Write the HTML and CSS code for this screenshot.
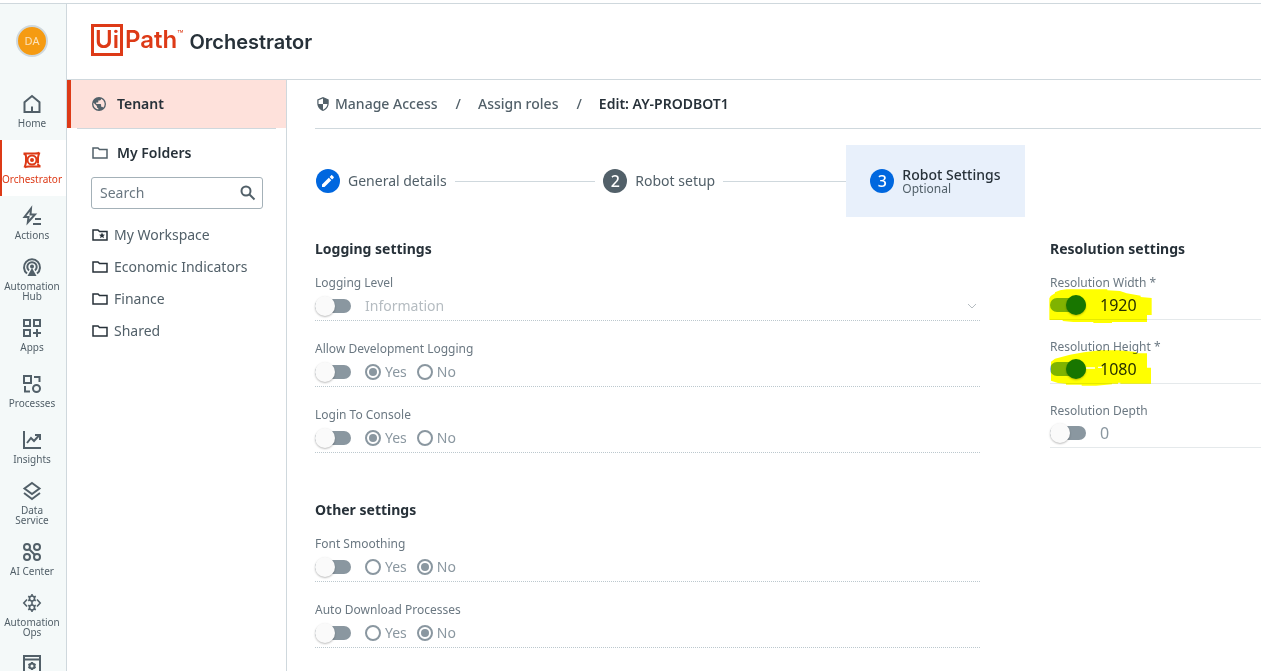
FILE: index.html
```html
<!DOCTYPE html>
<html lang="en">
<head>
<meta charset="utf-8">
<meta name="viewport" content="width=device-width, initial-scale=1">
<title>UiPath Orchestrator</title>
<link rel="stylesheet" href="styles.css">
</head>
<body>
<div class="app">
  <nav class="rail" aria-label="Services">
    <button class="avatar" type="button">DA</button>
    <a class="rail-item" href="#"><svg class="rail-icon" viewBox="0 0 18 18"><path d="M1.500 17V7.200L9 1l7.500 6.200V17zM9 17v-5.500"/></svg><span>Home</span></a>
    <a class="rail-item rail-item-active" href="#"><svg class="rail-icon" viewBox="0 0 18 18"><path d="M.5 2.500H12M16.500 1.500C15.500 4 15 5.500 15 7v5M17.500 15.500H6M1.500 16.500C2.500 14 3 12.500 3 11V5M3 5.500C3 4 2.500 3 .5 2.500M15 12.500c0 1.500.5 2.500 2.500 3M12 2.500c2 0 3.500-.3 4.500-1M6 15.500c-2 0-3.500.3-4.500 1"/><circle cx="9" cy="9" r="4.500"/><circle cx="9" cy="9" r="1"/></svg><span>Orchestrator</span></a>
    <a class="rail-item" href="#"><svg class="rail-icon" viewBox="0 0 18 18"><path d="M8 1.500L1.500 10h4L4.800 15.500 12 7.500H7.500zM12 12h6M10 17h8"/></svg><span>Actions</span></a>
    <a class="rail-item" href="#"><svg class="rail-icon" viewBox="0 0 18 18"><path d="M4 15.500a8 8 0 1 1 10 0M6 12.500a4.700 4.700 0 1 1 6 0"/><path class="solid" d="M9 10l4.500 8h-9z"/><circle cx="9" cy="8.500" r="1"/></svg><span>Automation<br>Hub</span></a>
    <a class="rail-item" href="#"><svg class="rail-icon" viewBox="0 0 18 18"><path d="M1 1h6v6H1zM11 1h6v6h-6zM1 11h6v6H1zM14 10v8M10 14h8"/></svg><span>Apps</span></a>
    <a class="rail-item" href="#"><svg class="rail-icon" viewBox="0 0 18 18"><path d="M1 1h7v7H1zM11 2h5.500v5M2 11v5.500h5"/><circle cx="13.500" cy="13.500" r="3.500"/></svg><span>Processes</span></a>
    <a class="rail-item" href="#"><svg class="rail-icon" viewBox="0 0 18 18"><path d="M1 0v17h17M4 12l4-5 3 3 5-5.500M12 4h5v5"/></svg><span>Insights</span></a>
    <a class="rail-item" href="#"><svg class="rail-icon" viewBox="0 0 18 18"><path d="M9 1l7.500 5.500L9 12 1.500 6.500zM1 11l8 6 8-6"/></svg><span>Data<br>Service</span></a>
    <a class="rail-item" href="#"><svg class="rail-icon" viewBox="0 0 18 18"><circle cx="4" cy="4" r="3"/><circle cx="14" cy="4" r="3"/><circle cx="4" cy="14" r="3"/><circle cx="14" cy="14" r="3"/><path d="M6 6l6 6"/></svg><span>AI Center</span></a>
    <a class="rail-item" href="#"><svg class="rail-icon rail-icon-fine" viewBox="0 0 18 18"><circle cx="9" cy="4.500" r="2.500"/><circle cx="9" cy="13.500" r="2.500"/><path d="M9 0v2M5.200 2.300l1.600 1M12.800 2.300l-1.600 1M5.200 6.700l1.600-1M12.800 6.700l-1.600-1M9 7v4M5.200 11.300l1.600 1M12.800 11.300l-1.600 1M5.200 15.700l1.600-1M12.800 15.700l-1.600-1M9 16v2M4 5.500L.8 9 4 12.500M14 5.500L17.200 9 14 12.500"/></svg><span>Automation<br>Ops</span></a>
    <a class="rail-item rail-item-last" href="#"><svg class="rail-icon" viewBox="0 0 18 18"><path d="M1 1h16v16H1zM1 4.500h16M9 7v2M9 13v2M5.500 9L7 10M12.500 9L11 10M5.500 13L7 12M12.500 13L11 12"/><circle cx="9" cy="11" r="2.500"/></svg></a>
  </nav>
  <div class="workspace">
    <header class="topbar">
      <a class="brand" href="#"><span class="brand-box">Ui</span><span class="brand-path">Path</span><span class="brand-tm">™</span><span class="brand-product">Orchestrator</span></a>
    </header>
    <div class="columns">
      <aside class="sidebar">
        <a class="tenant" href="#"><svg class="glyph" viewBox="2 2 20 20"><path d="M12 2a10 10 0 1 0 0 20 10 10 0 0 0 0-20zm-1 17.930A7.990 7.990 0 0 1 4.210 10.210L9 15v1a2 2 0 0 0 2 2zm6.900-2.540A2 2 0 0 0 16 16h-1v-3a1 1 0 0 0-1-1H8v-2h2a1 1 0 0 0 1-1V7h2a2 2 0 0 0 2-2v-.41a7.990 7.990 0 0 1 2.900 12.800z"/></svg><span>Tenant</span></a>
        <div class="folders">
          <div class="folders-title"><svg class="folder" viewBox="0 0 16 12"><path d="M1 1h5l1.500 1.500H15V11H1z"/></svg><span>My Folders</span></div>
          <div class="search"><input type="search" aria-label="Search" placeholder="Search"><svg viewBox="0 0 16 16"><circle cx="6" cy="6" r="4.500"/><path d="M9.500 9.500l5 5"/></svg></div>
          <a class="folder-row" href="#"><svg class="folder" viewBox="0 0 16 12"><path d="M1 1h5l1.500 1.500H15V11H1z"/><path class="star" d="M10 3.500l.9 2 2.100.2-1.600 1.400.5 2.200-1.900-1.200-1.900 1.200.5-2.200L7 5.700l2.100-.2z"/></svg><span>My Workspace</span></a>
          <a class="folder-row" href="#"><svg class="folder" viewBox="0 0 16 12"><path d="M1 1h5l1.500 1.500H15V11H1z"/></svg><span>Economic Indicators</span></a>
          <a class="folder-row" href="#"><svg class="folder" viewBox="0 0 16 12"><path d="M1 1h5l1.500 1.500H15V11H1z"/></svg><span>Finance</span></a>
          <a class="folder-row" href="#"><svg class="folder" viewBox="0 0 16 12"><path d="M1 1h5l1.500 1.500H15V11H1z"/></svg><span>Shared</span></a>
        </div>
      </aside>
      <main class="content">
        <nav class="crumbs" aria-label="Breadcrumb">
          <a href="#"><svg class="shield" viewBox="3 1 18 22"><path d="M12 1L3 5v6c0 5.500 3.800 10.700 9 12 5.200-1.300 9-6.500 9-12V5zm0 11h7c-.5 4.100-3.300 7.800-7 8.900V12H5V6.300l7-3.100z"/></svg>Manage Access</a>
          <span class="slash">/</span>
          <a href="#">Assign roles</a>
          <span class="slash">/</span>
          <span class="current">Edit: AY-PRODBOT1</span>
        </nav>
        <div class="stepper">
          <button class="step" type="button"><span class="badge badge-blue"><svg viewBox="0 0 14 14"><path d="M1 10.500V13h2.500l6.800-6.800-2.500-2.500zM8.600 2.900l2.500 2.500 1.500-1.500c.4-.4.4-.9 0-1.200L11.300 1.400c-.4-.4-.9-.4-1.200 0z"/></svg></span>General details</button>
          <span class="track track-first"></span>
          <button class="step" type="button"><span class="badge">2</span>Robot setup</button>
          <span class="track track-last"></span>
          <button class="step step-active" type="button" aria-current="step"><span class="badge badge-blue">3</span><span class="step-text"><span class="step-title">Robot Settings</span><small>Optional</small></span></button>
        </div>
        <form class="settings">
          <div>
            <section class="group">
              <h2>Logging settings</h2>
              <div class="field">
                <label class="caption" for="level">Logging Level</label>
                <div class="control"><input class="switch" type="checkbox" aria-label="Override logging level"><select id="level" disabled><option>Information</option></select><svg class="chevron" viewBox="0 0 10 6"><path d="M1 1l4 4 4-4"/></svg></div>
              </div>
              <div class="field" role="group" aria-labelledby="dev">
                <span class="caption" id="dev">Allow Development Logging</span>
                <div class="control"><input class="switch" type="checkbox" aria-labelledby="dev"><label class="choice"><input type="radio" name="dev" checked>Yes</label><label class="choice"><input type="radio" name="dev">No</label></div>
              </div>
              <div class="field" role="group" aria-labelledby="console">
                <span class="caption" id="console">Login To Console</span>
                <div class="control"><input class="switch" type="checkbox" aria-labelledby="console"><label class="choice"><input type="radio" name="console" checked>Yes</label><label class="choice"><input type="radio" name="console">No</label></div>
              </div>
            </section>
            <section class="group">
              <h2>Other settings</h2>
              <div class="field" role="group" aria-labelledby="smooth">
                <span class="caption" id="smooth">Font Smoothing</span>
                <div class="control"><input class="switch" type="checkbox" aria-labelledby="smooth"><label class="choice"><input type="radio" name="smooth">Yes</label><label class="choice"><input type="radio" name="smooth" checked>No</label></div>
              </div>
              <div class="field" role="group" aria-labelledby="auto">
                <span class="caption" id="auto">Auto Download Processes</span>
                <div class="control"><input class="switch" type="checkbox" aria-labelledby="auto"><label class="choice"><input type="radio" name="auto">Yes</label><label class="choice"><input type="radio" name="auto" checked>No</label></div>
              </div>
            </section>
          </div>
          <section class="group resolution">
            <h2>Resolution settings</h2>
            <div class="field">
              <label class="caption" for="rw">Resolution Width *</label>
              <div class="control"><input class="switch" type="checkbox" aria-label="Override width" checked><input class="number" id="rw" type="text" value="1920">
                <svg class="marker" width="104" height="35" viewBox="57 177 312 105"><path d="M58 205L62 198 75 190V187L90 181 110 178H232V181L270 183 290 190 332 197V201L365 204V255H351V276H246V279H190V276L130 276 98 273V270H58z"/></svg></div>
            </div>
            <div class="field">
              <label class="caption" for="rh">Resolution Height *</label>
              <div class="control"><input class="switch" type="checkbox" aria-label="Override height" checked><input class="number" id="rh" type="text" value="1080">
                <svg class="marker marker-tall" width="104" height="38" viewBox="57 357 312 114"><path fill-rule="evenodd" d="M63 395L75 386 120 374 162 367 210 361 265 361 320 366V370H351V413H363V461H271V458H264V461H246V463L198 467H155V464L108 464V461L84 459 63 452zM168 412h27v4h-27zM204 410h12v4h-12z"/></svg></div>
            </div>
            <div class="field">
              <label class="caption" for="rd">Resolution Depth</label>
              <div class="control"><input class="switch" type="checkbox" aria-label="Override depth"><input class="number" id="rd" type="text" value="0" disabled></div>
            </div>
          </section>
        </form>
      </main>
    </div>
  </div>
</div>
</body>
</html>
```
FILE: styles.css
```css
* { box-sizing: border-box; }
body {
  margin: 0;
  padding-top: 3px;
  height: 100vh;
  overflow: hidden;
  font: 14px/20px "Noto Sans", sans-serif;
  color: #526069;
  background: #fff;
}
a { color: inherit; text-decoration: none; }
button, input, select { font: inherit; color: inherit; }
button { border: 0; background: none; padding: 0; cursor: pointer; }
svg { flex: none; display: block; }

.app { display: flex; height: 100%; border-top: 1px solid #cfd8dd; }

.rail {
  flex: none;
  width: 67px;
  background: #f4f9f9;
  border-right: 1px solid #cfd8dd;
  overflow: hidden;
}
.avatar {
  display: block;
  width: 32px;
  height: 32px;
  margin: 21px auto 27px 16px;
  border: 2px solid #cfd8dd;
  border-radius: 50%;
  background: #f59b12;
  color: #fbe2bb;
  font-size: 11px;
  line-height: 28px;
}
.rail-item {
  height: 56px;
  display: flex;
  flex-direction: column;
  align-items: center;
  justify-content: center;
  gap: 5px;
  padding: 0 2px 1px 0;
  font-size: 10px;
  line-height: 10px;
  text-align: center;
}
.rail-item-last { justify-content: flex-start; padding-top: 11px; }
.rail-icon {
  width: 18px;
  height: 18px;
  overflow: visible;
  fill: none;
  stroke: #526069;
  stroke-width: 2;
}
.rail-icon-fine { stroke-width: 1.600; }
.rail-icon .solid { fill: #526069; stroke: none; }
.rail-item-active { background: #fff; color: #dd3a17; box-shadow: inset 2px 0 #dd3a17; }
.rail-item-active .rail-icon { stroke: #dd3a17; }

.workspace { flex: 1; min-width: 0; display: flex; flex-direction: column; }
.topbar {
  flex: none;
  height: 76px;
  padding: 20px 24px;
  border-bottom: 1px solid #cfd8dd;
}
.brand {
  display: flex;
  color: #dd3a17;
  font-family: Inter, sans-serif;
  font-size: 24px;
  font-weight: 600;
  line-height: 32px;
}
.brand-box {
  width: 32px;
  height: 32px;
  border: 3px solid;
  line-height: 26px;
  text-align: center;
}
.brand-path { margin-left: 2px; }
.brand-tm { font-size: 10px; font-weight: 400; line-height: 20px; }
.brand-product { margin-left: 6px; color: #273139; font-size: 20px; line-height: 36px; }

.columns { flex: 1; min-height: 0; display: flex; }
.sidebar { flex: none; width: 220px; border-right: 1px solid #cfd8dd; }
.tenant {
  height: 48px;
  display: flex;
  align-items: center;
  gap: 11px;
  padding-left: 21px;
  border-left: 4px solid #dd3a17;
  background: #fee1db;
  color: #273139;
  font-weight: 600;
}
.glyph { width: 14px; height: 14px; fill: #526069; }
.folders { margin: 0 10px; padding: 0 13px 0 14px; border-top: 1px solid #cfd8dd; }
.folders-title {
  height: 48px;
  display: flex;
  align-items: center;
  gap: 9px;
  padding-left: 1px;
  color: #273139;
  font-weight: 600;
}
.folder { width: 16px; height: 12px; fill: none; stroke: #273139; stroke-width: 1.500; }
.folders-title .folder { stroke: #526069; }
.folder .star { fill: #273139; stroke: none; }
.search {
  height: 32px;
  display: flex;
  align-items: center;
  margin-bottom: 10px;
  padding: 0 6px 0 8px;
  border: 1px solid #a4b1b8;
  border-radius: 3px;
}
.search input { flex: 1; min-width: 0; padding: 0; border: 0; outline: 0; background: none; }
.search input::placeholder { color: #6b7882; }
.search svg { width: 16px; height: 16px; fill: none; stroke: #526069; stroke-width: 2; }
.folder-row { height: 32px; display: flex; align-items: center; gap: 6px; padding-left: 1px; }

.content { flex: 1; min-width: 0; padding-left: 28px; overflow: hidden; }
.crumbs {
  height: 49px;
  display: flex;
  align-items: center;
  padding-left: 2px;
  border-bottom: 1px solid #cfd8dd;
  font-weight: 500;
}
.crumbs a { display: flex; align-items: center; gap: 6px; }
.slash { margin: 0 17px 0 18px; }
.current { color: #273139; font-weight: 600; }
.shield { width: 12px; height: 14px; fill: #526069; }

.stepper { width: 75%; display: flex; align-items: center; margin-top: 16px; padding-left: 1px; }
.step { display: flex; align-items: center; gap: 8px; white-space: nowrap; text-align: left; }
.step-active { height: 72px; padding: 0 24px; background: #e8f0fb; color: #273139; }
.step-text { display: flex; flex-direction: column; line-height: 16px; }
.step-title { font-weight: 500; }
.step-text small { font-size: 12px; line-height: 12px; color: #526069; }
.badge {
  width: 24px;
  height: 24px;
  display: grid;
  place-items: center;
  border-radius: 50%;
  background: #526069;
  color: #fff;
  font-size: 16px;
  font-weight: 500;
}
.badge-blue { background: #0067df; }
.badge svg { width: 14px; height: 14px; fill: #fff; }
.track { height: 1px; background: #cfd8dd; }
.track-first { flex: 8; margin: 0 8px; }
.track-last { flex: 7; margin-left: 8px; }

.settings {
  display: grid;
  grid-template-columns: minmax(0, 665fr) minmax(0, 211fr);
  gap: 70px;
  margin-top: 22px;
}
.group { margin-bottom: 47px; }
.group h2 { margin: 0 0 16px; font-size: 14px; line-height: 20px; font-weight: 700; color: #273139; }
.field { margin-bottom: 20px; border-bottom: 1px dotted #bcc8ce; }
.caption { display: block; font-size: 12px; line-height: 16px; color: #6b7882; }
.control { position: relative; height: 29px; display: flex; align-items: center; color: #8a97a0; }
.switch {
  appearance: none;
  flex: none;
  width: 36px;
  height: 14px;
  display: flex;
  align-items: center;
  margin: 0 14px 0 0;
  border-radius: 7px;
  background: #8a97a0;
}
.switch::before {
  content: "";
  width: 20px;
  height: 20px;
  border-radius: 50%;
  background: #fafafa;
  box-shadow: 0 1px 2px #0004;
}
.switch:checked { justify-content: flex-end; background: #80b3ef; }
.switch:checked::before { background: #1876d2; }
.control select {
  appearance: none;
  flex: 1;
  padding: 0;
  border: 0;
  background: none;
  color: #b5bcc1;
  opacity: 1;
}
.chevron { width: 10px; height: 6px; margin-right: 3px; fill: none; stroke: #b5bcc1; }
.choice { display: flex; align-items: center; gap: 4px; margin-right: 10px; }
.choice input {
  appearance: none;
  width: 16px;
  height: 16px;
  display: grid;
  place-items: center;
  margin: 0;
  border: 2px solid #8a97a0;
  border-radius: 50%;
}
.choice input:checked::before {
  content: "";
  width: 8px;
  height: 8px;
  border-radius: 50%;
  background: #8a97a0;
}
.resolution .field { border-bottom: 1px solid #e5e9eb; margin-bottom: 19px; }
.resolution .control { height: 28px; }
.number { flex: 1; min-width: 0; padding: 0; border: 0; outline: 0; background: none; color: #273139; font-size: 16px; }
.number:disabled { color: #8a97a0; }
.marker { position: absolute; left: -1px; top: -2px; fill: #ff0; mix-blend-mode: multiply; pointer-events: none; }
.marker-tall { top: -6px; }
```
